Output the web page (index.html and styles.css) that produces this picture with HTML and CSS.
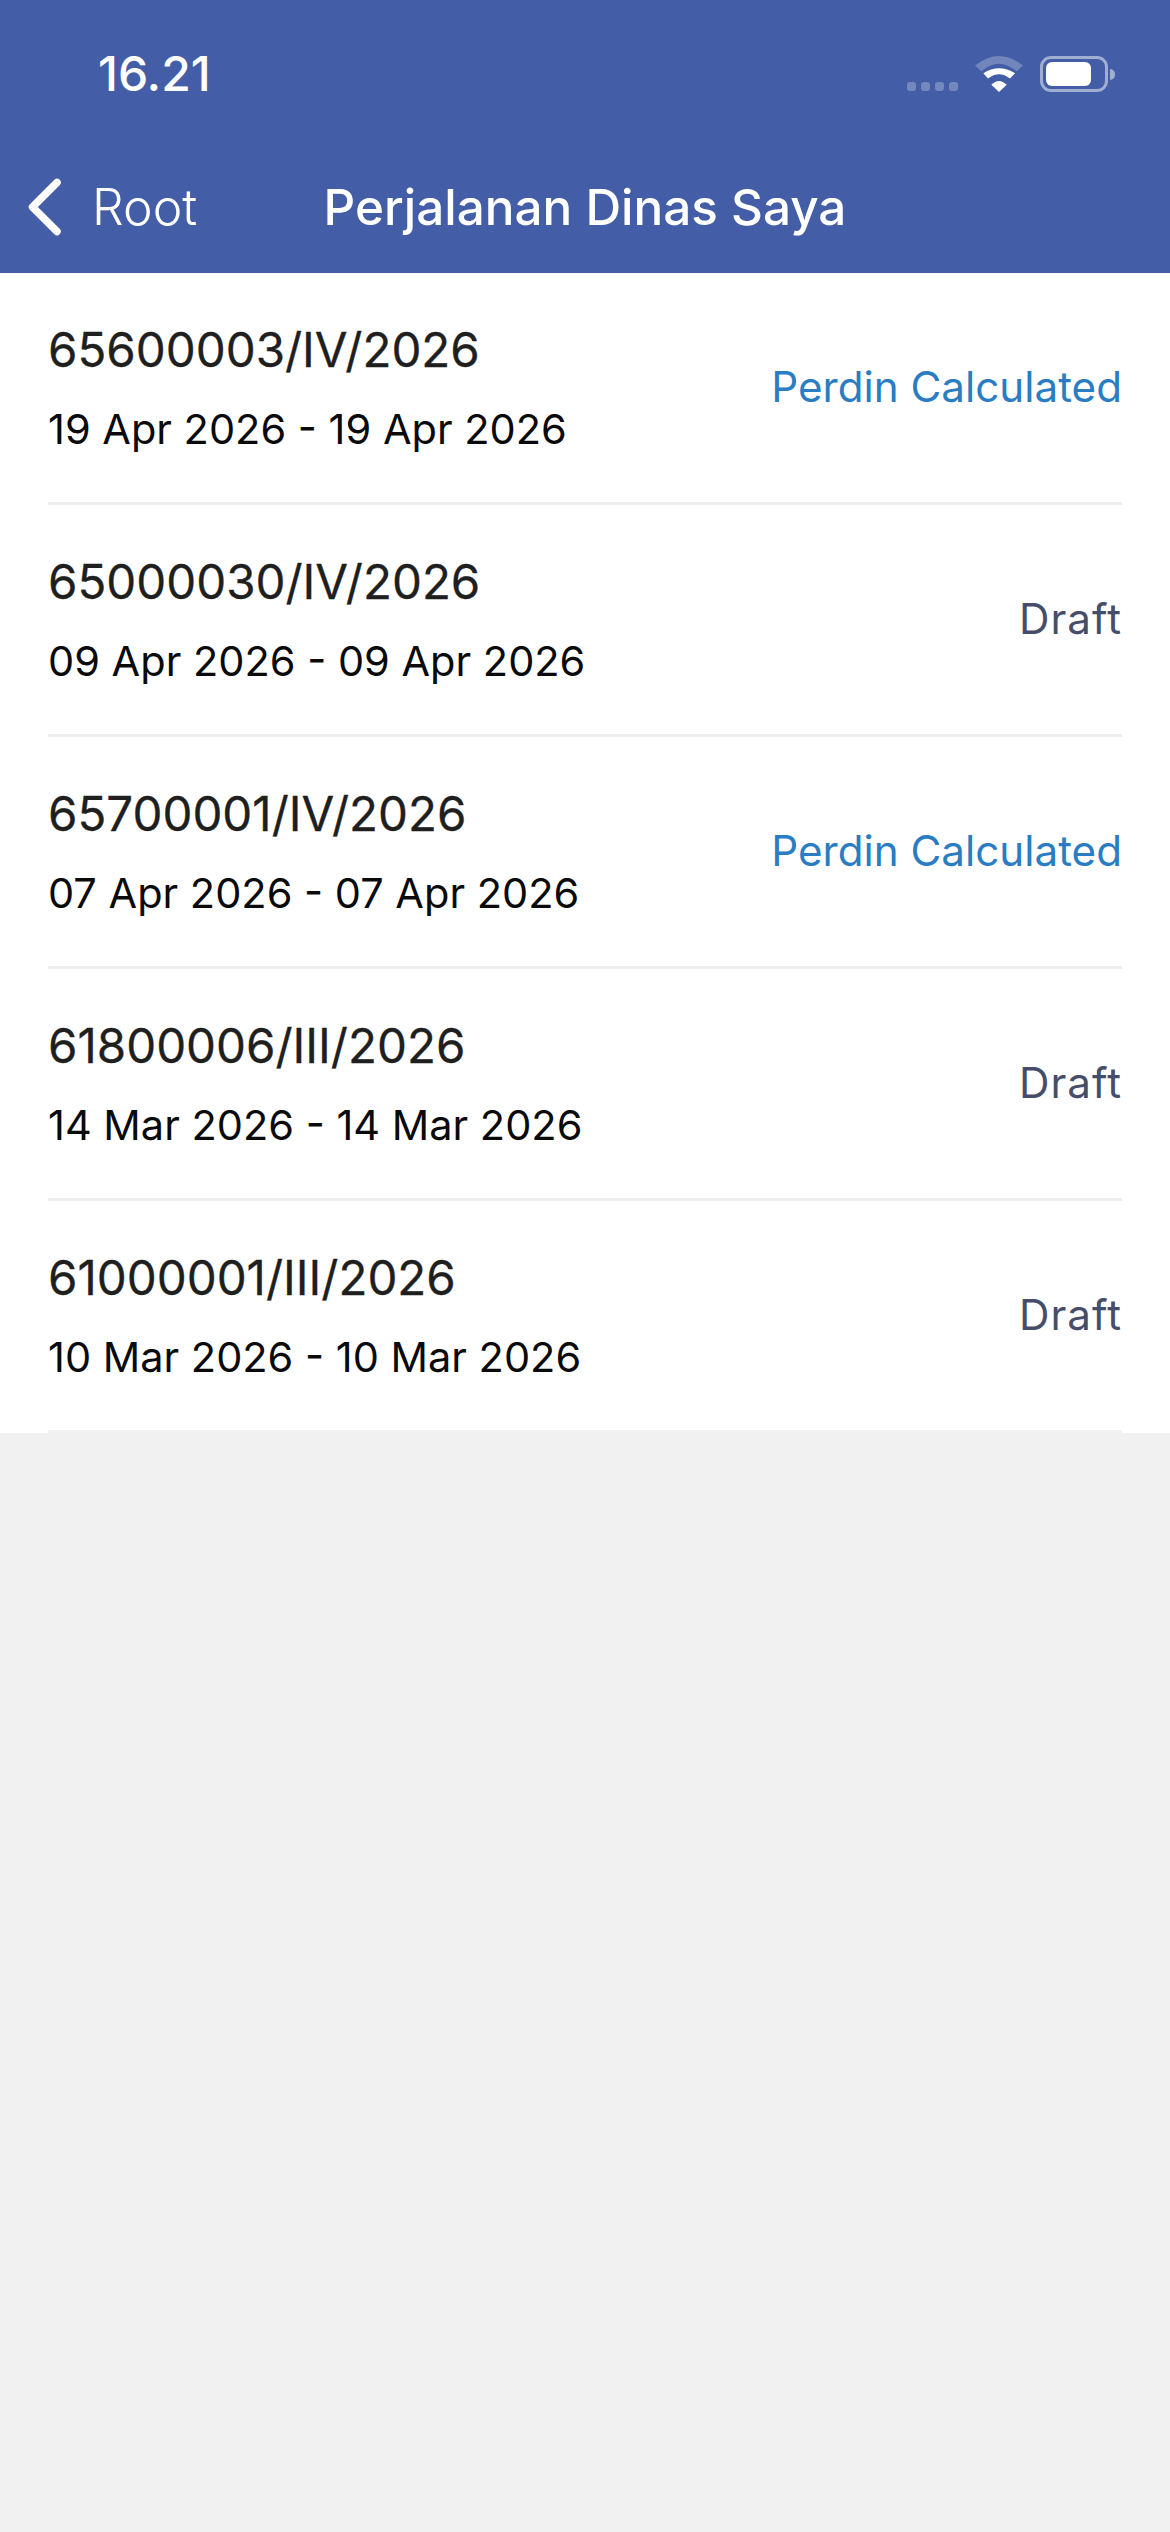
FILE: index.html
```html
<!DOCTYPE html>
<html>
<head>
	<meta charset="utf-8">
	<meta name="viewport" content="width=device-width, initial-scale=1">
	<title>Perjalanan Dinas Saya</title>
	<link rel="stylesheet" href="styles.css">
</head>
<body>
<div class="header">
	<div class="status-bar">
		<span class="clock">16.21</span>
		<div class="status-icons">
			<div class="signal"><i></i><i></i><i></i><i></i></div>
			<svg class="wifi" width="48" height="36" viewBox="0 0 50 37.500">
				<path d="M0 10 Q25 -10 50 10 L43.500 16 Q25 0 6.500 16 Z" fill="#fff" fill-opacity="0.25"/>
				<path d="M8.700 18 Q25 7.600 41.700 18 L36.500 23.500 Q25 14.500 13.500 23.500 Z" fill="#fff"/>
				<path d="M17 30 Q25 22 33 30 L25 37.500 Z" fill="#fff"/>
			</svg>
			<div class="battery">
				<div class="battery-body"><div class="battery-fill"></div></div>
				<div class="battery-cap"></div>
			</div>
		</div>
	</div>
	<div class="nav-bar">
		<div class="back">
			<svg width="36" height="60" viewBox="0 0 36 60">
				<path d="M31 5.500 L6.500 30 L31 54.500" fill="none" stroke="#fff" stroke-width="7.500" stroke-linecap="round" stroke-linejoin="round"/>
			</svg>
			<span class="back-label">Root</span>
		</div>
		<div class="nav-title">Perjalanan Dinas Saya</div>
	</div>
</div>
<div class="list">
	<div class="row">
		<div class="row-main">
			<div class="row-number">65600003/IV/2026</div>
			<div class="row-date">19 Apr 2026 - 19 Apr 2026</div>
		</div>
		<div class="row-status calculated">Perdin Calculated</div>
	</div>
	<div class="row">
		<div class="row-main">
			<div class="row-number">65000030/IV/2026</div>
			<div class="row-date">09 Apr 2026 - 09 Apr 2026</div>
		</div>
		<div class="row-status draft">Draft</div>
	</div>
	<div class="row">
		<div class="row-main">
			<div class="row-number">65700001/IV/2026</div>
			<div class="row-date">07 Apr 2026 - 07 Apr 2026</div>
		</div>
		<div class="row-status calculated">Perdin Calculated</div>
	</div>
	<div class="row">
		<div class="row-main">
			<div class="row-number">61800006/III/2026</div>
			<div class="row-date">14 Mar 2026 - 14 Mar 2026</div>
		</div>
		<div class="row-status draft">Draft</div>
	</div>
	<div class="row">
		<div class="row-main">
			<div class="row-number">61000001/III/2026</div>
			<div class="row-date">10 Mar 2026 - 10 Mar 2026</div>
		</div>
		<div class="row-status draft">Draft</div>
	</div>
</div>
</body>
</html>
```

FILE: styles.css
```css
html, body
{
	margin:0;
	padding:0;
}
body
{
	min-height:2532px;
	background-color:#f1f1f1;
	font-family:Inter, "Liberation Sans", sans-serif;
}
.header
{
	height:273px;
	background-color:#435ea6;
	color:white;
}
.status-bar
{
	height:150px;
	box-sizing:border-box;
	padding:46px 55px 0 98px;
	display:flex;
	justify-content:space-between;
	align-items:flex-start;
}
.clock
{
	font-size:48px;
	font-weight:500;
	line-height:56px;
}
.status-icons
{
	display:flex;
	align-items:center;
	gap:17px;
	margin-top:10px;
}
.signal
{
	display:flex;
	gap:5px;
	margin-top:25px;
}
.signal i
{
	width:9px;
	height:9px;
	border-radius:3px;
	background-color:#7488bd;
}
.wifi
{
	display:block;
}
.battery
{
	display:flex;
	align-items:center;
	gap:2px;
}
.battery-body
{
	width:68px;
	height:36px;
	box-sizing:border-box;
	border:3px solid #a0aed2;
	border-radius:11px;
	padding:3px;
	display:flex;
}
.battery-fill
{
	width:45px;
	background-color:white;
	border-radius:6px;
}
.battery-cap
{
	width:5px;
	height:11px;
	background-color:#a0aed2;
	border-radius:0 5px 5px 0;
}
.nav-bar
{
	height:123px;
	display:grid;
	grid-template-columns:1fr auto 1fr;
	align-items:center;
	padding-bottom:10px;
	box-sizing:border-box;
}
.back
{
	display:flex;
	align-items:center;
	gap:30px;
	padding-left:26px;
}
.back svg
{
	display:block;
}
.back-label
{
	font-size:50px;
	font-weight:300;
}
.nav-title
{
	font-size:49.400px;
	font-weight:500;
}
.list
{
	background-color:white;
}
.row
{
	height:232px;
	box-sizing:border-box;
	margin:0 48px;
	border-bottom:3px solid #eeeeee;
	display:flex;
	justify-content:space-between;
	align-items:center;
}
.row:last-child
{
	border-bottom-color:#f1f1f1;
}
.row-number
{
	font-size:47.500px;
	line-height:56px;
	color:#1f1f1f;
	-webkit-text-stroke:0.3px #1f1f1f;
}
.row-date
{
	font-size:41.500px;
	line-height:48px;
	margin-top:27px;
	color:#0a0a0a;
}
.row-status
{
	font-size:42.200px;
	font-weight:400;
	padding-bottom:2px;
}
.calculated
{
	color:#2a7dc2;
}
.draft
{
	color:#454d68;
	letter-spacing:1px;
}
```
